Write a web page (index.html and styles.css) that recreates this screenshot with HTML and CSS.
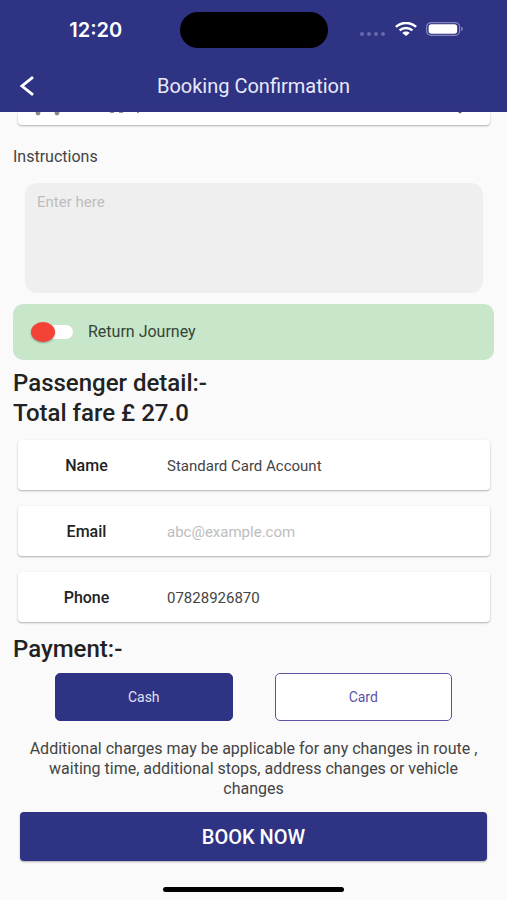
FILE: index.html
```html
<!DOCTYPE html>
<html lang="en">
<head>
<meta charset="utf-8">
<meta name="viewport" content="width=device-width, initial-scale=1">
<title>Booking Confirmation</title>
<link rel="stylesheet" href="styles.css">
</head>
<body>
<header class="header">
  <div class="status">
    <time class="clock">12:20</time>
    <div class="island"></div>
    <div class="indicators">
      <svg class="signal" width="26" height="4" viewBox="0 0 26 4" aria-hidden="true"><circle cx="2" cy="2" r="2"/><circle cx="9" cy="2" r="2"/><circle cx="16" cy="2" r="2"/><circle cx="23" cy="2" r="2"/></svg>
      <svg width="22" height="14" viewBox="0 0 22 14" fill="none" stroke="#fff" stroke-width="2.6" aria-hidden="true"><path d="M.9 4.9C6.6-.3 15.4-.3 21.1 4.9M4.6 8.4c3.6-3.2 9.2-3.2 12.8 0"/><path d="M7.3 11c2.1-1.9 5.3-1.9 7.4 0L11 14z" fill="#fff" stroke="none"/></svg>
      <svg width="38" height="14" viewBox="0 0 38 14" aria-hidden="true"><rect x=".6" y=".6" width="33" height="12.8" rx="4.4" fill="none" stroke="#8587bb" stroke-width="1.2"/><rect x="2.6" y="2.2" width="28.6" height="9.6" rx="2.8" fill="#fff"/><path d="M35.2 4.8c2.2.7 2.2 3.7 0 4.4z" fill="#8587bb"/></svg>
    </div>
  </div>
  <div class="appbar">
    <button class="back" type="button" aria-label="Back"><svg width="14" height="20" viewBox="0 0 14 20" fill="none" stroke="#fff" stroke-width="2.8" aria-hidden="true"><path d="M13 1.2 2 10l11 8.8"/></svg></button>
    <h1 class="title">Booking Confirmation</h1>
  </div>
</header>
<main class="content">
  <div class="card vehicle">
    <svg width="130" height="5" viewBox="0 0 130 5" aria-hidden="true"><g fill="#888"><circle cx="20" cy="1" r="2.4"/><circle cx="39" cy="1" r="2.4"/></g><path d="M92 .3h4M101 .3h4M119 .3h2" stroke="#555" stroke-width=".8"/></svg>
    <svg width="4" height="2" viewBox="0 0 4 2" aria-hidden="true"><path d="M0 0h4L2 1.5z" fill="#555"/></svg>
  </div>
  <label class="label" for="instructions">Instructions</label>
  <textarea class="instructions" id="instructions" placeholder="Enter here"></textarea>
  <label class="return"><input class="switch" type="checkbox" role="switch"><span>Return Journey</span></label>
  <h2 class="heading">Passenger detail:-</h2>
  <h2 class="heading">Total fare £ 27.0</h2>
  <div class="fields">
    <div class="card field"><label for="name">Name</label><input id="name" type="text" value="Standard Card Account"></div>
    <div class="card field"><label for="email">Email</label><input id="email" type="email" placeholder="abc@example.com"></div>
    <div class="card field"><label for="phone">Phone</label><input id="phone" type="tel" value="07828926870"></div>
  </div>
  <h2 class="heading">Payment:-</h2>
  <div class="payment">
    <button class="pay selected" type="button">Cash</button>
    <button class="pay" type="button">Card</button>
  </div>
  <p class="note">Additional charges may be applicable for any changes in route , waiting time, additional stops, address changes or vehicle changes</p>
  <button class="book" type="button">BOOK NOW</button>
  <div class="home"></div>
</main>
</body>
</html>
```
FILE: styles.css
```css
* { box-sizing: border-box; }
body {
  margin: 0;
  background: #fafafa;
  color: #444;
  font: 15px/20px Roboto, "Liberation Sans", sans-serif;
}
button, input, textarea { font: inherit; color: inherit; }
button { cursor: pointer; }

.header { background: #2f3384; color: #fff; }
.status {
  display: grid;
  grid-template-columns: 1fr 148px 1fr;
  align-items: center;
  height: 60px;
}
.clock {
  padding-left: 12px;
  text-align: center;
  font: 600 20px/24px Inter, sans-serif;
}
.island { height: 36px; border-radius: 18px; background: #000; }
.indicators {
  display: flex;
  align-items: center;
  justify-content: flex-end;
  gap: 9px;
  padding-right: 43px;
}
.indicators svg { margin-bottom: 2px; }
.signal { fill: #6669aa; margin-top: 10px; }
.appbar {
  display: grid;
  grid-template-columns: 54px 1fr 54px;
  align-items: center;
  height: 52px;
}
.back {
  display: flex;
  padding: 8px 20px;
  border: 0;
  background: none;
}
.title { margin: 0; text-align: center; font-size: 20px; font-weight: 400; line-height: 24px; color: #e8e9fa; }

.content { display: flex; flex-direction: column; padding: 0 13px; }
.card {
  margin: 0 4px 0 5px;
  border-radius: 4px;
  background: #fff;
  box-shadow: 0 1px 2px rgba(0, 0, 0, .3);
}
.vehicle {
  display: flex;
  align-items: flex-start;
  justify-content: space-between;
  height: 13px;
  padding-right: 28px;
  border-radius: 0 0 4px 4px;
}
.label { margin-top: 22px; font-size: 16px; }
.instructions {
  height: 110px;
  margin: 16px 11px 0 12px;
  padding: 9px 12px;
  border: 0;
  border-radius: 12px;
  background: #efefef;
  resize: none;
}
.instructions::placeholder, .field input::placeholder { color: #bdbdbd; opacity: 1; }
.return {
  display: flex;
  align-items: center;
  gap: 15px;
  height: 56px;
  margin: 11px 0 8px;
  padding-left: 18px;
  border-radius: 10px;
  background: #c8e6c9;
  color: #344537;
  font-size: 16px;
}
.switch {
  appearance: none;
  display: flex;
  align-items: center;
  width: 42px;
  height: 14px;
  margin: 0;
  border-radius: 7px;
  background: linear-gradient(#fff, #fff) right / 34px 14px no-repeat;
}
.switch::before {
  content: "";
  width: 24px;
  height: 20px;
  border-radius: 50%;
  background: #f44336;
  box-shadow: 0 1px 2px rgba(0, 0, 0, .35);
}
.switch:checked { justify-content: flex-end; }
.heading { margin: 0; color: #222; font-size: 24px; font-weight: 500; line-height: 30px; }

.fields { display: grid; gap: 16px; margin: 12px 0; }
.field {
  display: grid;
  grid-template-columns: 137px 1fr;
  align-items: center;
  height: 50px;
  padding-top: 1px;
}
.field label { text-align: center; color: #222; font-size: 16px; font-weight: 500; }
.field input {
  min-width: 0;
  padding: 0 12px;
  border: 0;
  background: none;
}

.payment {
  display: grid;
  grid-template-columns: 1fr 1fr;
  gap: 42px;
  margin: 9px 42px 18px;
}
.pay {
  height: 48px;
  border: 1px solid #5a55a5;
  border-radius: 5px;
  background: #fff;
  color: #5a55a5;
  font-size: 14px;
}
.pay.selected { border-color: #2f3384; background: #2f3384; color: #e0e1f6; }
.note { margin: 0 12px 13px; text-align: center; font-size: 16px; line-height: 20px; }
.book {
  height: 49px;
  margin: 0 7px;
  border: 0;
  border-radius: 4px;
  background: #2f3384;
  box-shadow: 0 1px 2px rgba(0, 0, 0, .3);
  color: #fff;
  font-size: 20px;
  font-weight: 500;
}
.home { align-self: center; width: 181px; height: 5px; margin: 26px 0 7px; border-radius: 3px; background: #000; }
```
